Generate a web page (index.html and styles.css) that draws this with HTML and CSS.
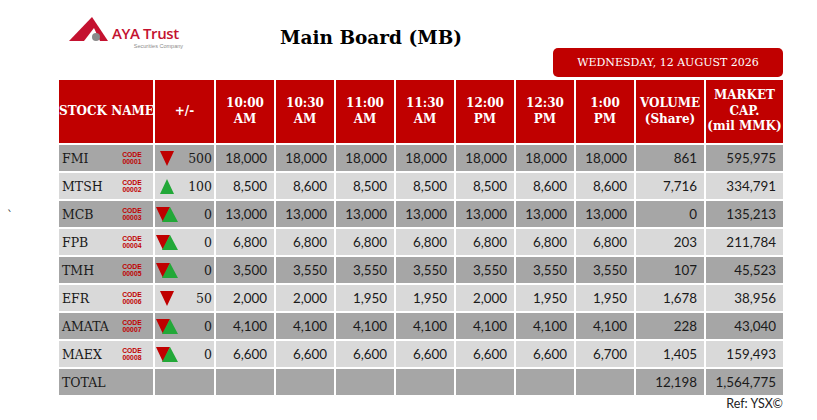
FILE: index.html
```html
<!DOCTYPE html>
<html lang="en">
<head>
<meta charset="utf-8">
<title>Main Board (MB)</title>
<link rel="stylesheet" href="styles.css">
</head>
<body>
<div class="page">
  <div class="gutter">`</div>
  <div class="main">
    <div class="top">
      <div class="logo">
        <svg class="logo-mark" width="40" height="25" viewBox="0 0 40 25">
          <polygon points="0,24 23,0 39,24" fill="#c41230"/>
          <polygon points="15,24 25,11 31,24" fill="#ffffff"/>
          <circle cx="27" cy="20" r="4" fill="#8a8a8a"/>
        </svg>
        <div class="logo-text">
          <div class="logo-name">AYA Trust</div>
          <div class="logo-sub">Securities Company</div>
        </div>
      </div>
      <h1 class="title">Main Board (MB)</h1>
    </div>
    <div class="date-row">
      <div class="date">WEDNESDAY, 12 AUGUST 2026</div>
    </div>
    <table class="board">
      <colgroup>
        <col class="c-name"><col class="c-chg">
        <col class="c-t"><col class="c-t"><col class="c-t"><col class="c-t"><col class="c-t"><col class="c-t"><col class="c-t">
        <col class="c-vol"><col class="c-cap">
      </colgroup>
      <thead>
        <tr class="head">
          <th class="nowrap">STOCK NAME</th>
          <th>+/-</th>
          <th>10:00<br>AM</th>
          <th>10:30<br>AM</th>
          <th>11:00<br>AM</th>
          <th>11:30<br>AM</th>
          <th>12:00<br>PM</th>
          <th>12:30<br>PM</th>
          <th>1:00<br>PM</th>
          <th>VOLUME<br>(Share)</th>
          <th>MARKET<br>CAP.<br>(mil MMK)</th>
        </tr>
      </thead>
      <tbody>
        <tr class="dark">
          <td class="stock"><div class="stock-in"><span class="name">FMI</span><span class="code">CODE<br>00001</span></div></td>
          <td class="chg"><div class="chg-in"><svg class="tri" width="22" height="15" viewBox="0 0 22 15"><polygon points="4,0 18,0 11,15" fill="#c00000"/></svg><span class="val">500</span></div></td>
          <td>18,000</td><td>18,000</td><td>18,000</td><td>18,000</td><td>18,000</td><td>18,000</td><td>18,000</td>
          <td>861</td><td>595,975</td>
        </tr>
        <tr class="light">
          <td class="stock"><div class="stock-in"><span class="name">MTSH</span><span class="code">CODE<br>00002</span></div></td>
          <td class="chg"><div class="chg-in"><svg class="tri" width="22" height="15" viewBox="0 0 22 15"><polygon points="11,0 18,15 4,15" fill="#22a838"/></svg><span class="val">100</span></div></td>
          <td>8,500</td><td>8,600</td><td>8,500</td><td>8,500</td><td>8,500</td><td>8,600</td><td>8,600</td>
          <td>7,716</td><td>334,791</td>
        </tr>
        <tr class="dark">
          <td class="stock"><div class="stock-in"><span class="name">MCB</span><span class="code">CODE<br>00003</span></div></td>
          <td class="chg"><div class="chg-in"><svg class="tri" width="22" height="15" viewBox="0 0 22 15"><polygon points="0,0 14,0 7,15" fill="#c00000"/><polygon points="14,0 22,15 6,15" fill="#22a838"/></svg><span class="val">0</span></div></td>
          <td>13,000</td><td>13,000</td><td>13,000</td><td>13,000</td><td>13,000</td><td>13,000</td><td>13,000</td>
          <td>0</td><td>135,213</td>
        </tr>
        <tr class="light">
          <td class="stock"><div class="stock-in"><span class="name">FPB</span><span class="code">CODE<br>00004</span></div></td>
          <td class="chg"><div class="chg-in"><svg class="tri" width="22" height="15" viewBox="0 0 22 15"><polygon points="0,0 14,0 7,15" fill="#c00000"/><polygon points="14,0 22,15 6,15" fill="#22a838"/></svg><span class="val">0</span></div></td>
          <td>6,800</td><td>6,800</td><td>6,800</td><td>6,800</td><td>6,800</td><td>6,800</td><td>6,800</td>
          <td>203</td><td>211,784</td>
        </tr>
        <tr class="dark">
          <td class="stock"><div class="stock-in"><span class="name">TMH</span><span class="code">CODE<br>00005</span></div></td>
          <td class="chg"><div class="chg-in"><svg class="tri" width="22" height="15" viewBox="0 0 22 15"><polygon points="0,0 14,0 7,15" fill="#c00000"/><polygon points="14,0 22,15 6,15" fill="#22a838"/></svg><span class="val">0</span></div></td>
          <td>3,500</td><td>3,550</td><td>3,550</td><td>3,550</td><td>3,550</td><td>3,550</td><td>3,550</td>
          <td>107</td><td>45,523</td>
        </tr>
        <tr class="light">
          <td class="stock"><div class="stock-in"><span class="name">EFR</span><span class="code">CODE<br>00006</span></div></td>
          <td class="chg"><div class="chg-in"><svg class="tri" width="22" height="15" viewBox="0 0 22 15"><polygon points="4,0 18,0 11,15" fill="#c00000"/></svg><span class="val">50</span></div></td>
          <td>2,000</td><td>2,000</td><td>1,950</td><td>1,950</td><td>2,000</td><td>1,950</td><td>1,950</td>
          <td>1,678</td><td>38,956</td>
        </tr>
        <tr class="dark">
          <td class="stock"><div class="stock-in"><span class="name">AMATA</span><span class="code">CODE<br>00007</span></div></td>
          <td class="chg"><div class="chg-in"><svg class="tri" width="22" height="15" viewBox="0 0 22 15"><polygon points="0,0 14,0 7,15" fill="#c00000"/><polygon points="14,0 22,15 6,15" fill="#22a838"/></svg><span class="val">0</span></div></td>
          <td>4,100</td><td>4,100</td><td>4,100</td><td>4,100</td><td>4,100</td><td>4,100</td><td>4,100</td>
          <td>228</td><td>43,040</td>
        </tr>
        <tr class="light">
          <td class="stock"><div class="stock-in"><span class="name">MAEX</span><span class="code">CODE<br>00008</span></div></td>
          <td class="chg"><div class="chg-in"><svg class="tri" width="22" height="15" viewBox="0 0 22 15"><polygon points="0,0 14,0 7,15" fill="#c00000"/><polygon points="14,0 22,15 6,15" fill="#22a838"/></svg><span class="val">0</span></div></td>
          <td>6,600</td><td>6,600</td><td>6,600</td><td>6,600</td><td>6,600</td><td>6,600</td><td>6,700</td>
          <td>1,405</td><td>159,493</td>
        </tr>
        <tr class="dark">
          <td class="stock"><div class="stock-in"><span class="name">TOTAL</span></div></td>
          <td></td>
          <td></td><td></td><td></td><td></td><td></td><td></td><td></td>
          <td>12,198</td><td>1,564,775</td>
        </tr>
      </tbody>
    </table>
    <div class="ref">Ref: YSX©</div>
  </div>
</div>
</body>
</html>
```

FILE: styles.css
```css
html, body {
  margin: 0;
  padding: 0;
  background: #ffffff;
}

.page {
  display: flex;
  align-items: flex-start;
}

.gutter {
  width: 50px;
  flex: none;
  padding: 209px 0 0 7px;
  font-family: "DejaVu Serif", serif;
  font-size: 12px;
  line-height: 14px;
  color: #333333;
}

.main {
  width: 728px;
  flex: none;
}

/* ---------- top ---------- */
.top {
  display: flex;
  height: 48px;
}

.logo {
  width: 211px;
  margin-left: 12px;
  padding-top: 17px;
  display: flex;
  align-items: flex-start;
  flex: none;
}

.logo-mark {
  display: block;
  flex: none;
}

.logo-text {
  margin-left: 3px;
  padding-top: 6px;
  width: 74px;
}

.logo-name {
  font-family: "Open Sans", "Liberation Sans", sans-serif;
  font-weight: 600;
  font-size: 15px;
  line-height: 20px;
  letter-spacing: -0.4px;
  color: #c41230;
  white-space: nowrap;
}

.logo-sub {
  font-family: "Liberation Sans", sans-serif;
  font-size: 5.5px;
  line-height: 6px;
  color: #8c8c8c;
  text-align: right;
  padding-right: 3px;
  white-space: nowrap;
}

.title {
  margin: 0;
  padding-top: 27px;
  font-family: "DejaVu Serif", serif;
  font-weight: bold;
  font-size: 18.5px;
  line-height: 22px;
  color: #000000;
  white-space: nowrap;
}

/* ---------- date ---------- */
.date-row {
  display: flex;
  justify-content: flex-end;
  padding-right: 2px;
}

.date {
  width: 230px;
  height: 29px;
  background: #c00000;
  color: #ffffff;
  border-radius: 5px;
  font-family: "DejaVu Serif", serif;
  font-size: 11px;
  display: flex;
  align-items: center;
  justify-content: center;
}

/* ---------- table ---------- */
.board {
  margin-top: 1px;
  width: 728px;
  table-layout: fixed;
  border-collapse: separate;
  border-spacing: 2px;
}

.c-name { width: 94px; }
.c-chg { width: 59px; }
.c-t { width: 58px; }
.c-vol { width: 68px; }
.c-cap { width: 77px; }

.head {
  height: 63px;
}

.board th {
  background: #c00000;
  color: #ffffff;
  font-family: "DejaVu Serif", serif;
  font-weight: bold;
  font-size: 12px;
  line-height: 15.5px;
  padding: 0;
  text-align: center;
  vertical-align: middle;
}

.board th.nowrap {
  white-space: nowrap;
}

.board tbody tr {
  height: 26px;
}

.board td {
  padding: 0 7px 0 0;
  text-align: right;
  vertical-align: middle;
  font-family: Lato, "Open Sans", sans-serif;
  font-size: 13.4px;
  color: #1a1a1a;
  white-space: nowrap;
}

.dark td {
  background: #a6a6a6;
}

.light td {
  background: #d9d9d9;
}

.board td.stock {
  padding: 0;
  text-align: left;
}

.stock-in {
  display: flex;
  align-items: center;
  justify-content: space-between;
  padding: 0 11px 0 3px;
}

.name {
  font-family: "DejaVu Serif", serif;
  font-size: 12.5px;
  color: #1a1a1a;
}

.code {
  font-family: "Liberation Sans", sans-serif;
  font-weight: bold;
  font-size: 6.8px;
  line-height: 7px;
  color: #c00000;
  text-align: center;
  width: 20px;
}

.board td.chg {
  padding: 0 2px 0 1px;
}

.chg-in {
  display: flex;
  align-items: center;
  justify-content: space-between;
}

.tri {
  display: block;
  flex: none;
}

.val {
  font-family: "DejaVu Serif", serif;
  font-size: 12.5px;
  color: #1a1a1a;
}

/* ---------- ref ---------- */
.ref {
  text-align: right;
  padding-right: 2px;
  font-family: Lato, "Open Sans", sans-serif;
  font-size: 12.5px;
  line-height: 14px;
  color: #222222;
}
```
